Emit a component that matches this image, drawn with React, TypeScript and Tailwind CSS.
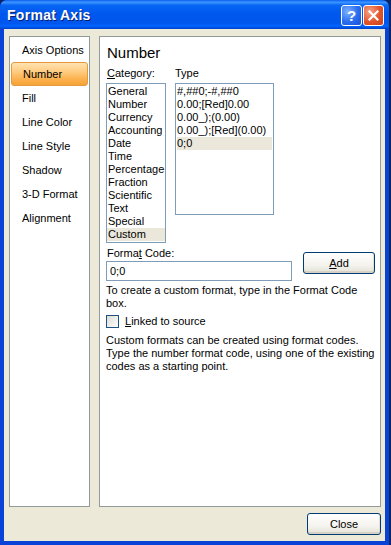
import React from "react";

const font = { fontFamily: '"Liberation Sans", Arial, sans-serif' };

function XPButton({ children, className = "" }: { children: React.ReactNode; className?: string }) {
  return (
    <div
      className={
        "flex items-center justify-center rounded-[3px] border border-[#003C74] bg-[linear-gradient(to_bottom,#FFFFFF_0%,#F4F3EE_60%,#E3E1D6_100%)] shadow-[inset_0_-2px_0_#D6D0C5,inset_-1px_0_0_#E3E0D4] text-[11px] text-black " +
        className
      }
    >
      {children}
    </div>
  );
}

export default function App() {
  const nav = ["Axis Options", "Number", "Fill", "Line Color", "Line Style", "Shadow", "3-D Format", "Alignment"];
  const cats = ["General", "Number", "Currency", "Accounting", "Date", "Time", "Percentage", "Fraction", "Scientific", "Text", "Special", "Custom"];
  const types = ["#,##0;-#,##0", "0.00;[Red]0.00", "0.00_);(0.00)", "0.00_);[Red](0.00)", "0;0"];
  return (
    <div className="w-[391px] h-[545px] bg-[#0A246A] flex" style={font}>
      <div className="w-[389px] h-[545px] flex flex-col rounded-t-[7px] overflow-hidden bg-[#0842D6]">
        {/* Title bar */}
        <div className="h-[29px] shrink-0 flex items-center pl-[7px] pr-[5px] bg-[linear-gradient(to_bottom,#0A5FF0_0%,#3D95FF_8%,#0766F4_18%,#0058EE_45%,#0056EC_80%,#0164FF_90%,#0040C8_100%)]">
          <span className="text-white font-bold text-[14px] tracking-[0.3px] mt-[2px] [text-shadow:1px_1px_0_#0A1E6E]">Format Axis</span>
          <div className="ml-auto flex gap-[1px] mt-[1px]">
            <div className="w-[21px] h-[21px] rounded-[3px] border border-white bg-[radial-gradient(circle_at_30%_30%,#7FB3FF_0%,#2A6CF0_55%,#1550D8_100%)] flex items-center justify-center text-white font-bold text-[15px] leading-none">?</div>
            <div className="w-[21px] h-[21px] rounded-[3px] border border-white bg-[radial-gradient(circle_at_30%_30%,#F6A488_0%,#E2542B_55%,#C8421E_100%)] flex items-center justify-center">
              <svg width="11" height="11" viewBox="0 0 11 11">
                <path d="M1.5 1.5 L9.5 9.5 M9.5 1.5 L1.5 9.5" stroke="white" strokeWidth="2.2" strokeLinecap="square" />
              </svg>
            </div>
          </div>
        </div>
        {/* Body */}
        <div className="flex-1 flex flex-col mx-[4px] mb-[4px] bg-[#ECE9D8]">
          <div className="flex pt-[7px] pl-[5px] pr-[4px] gap-[9px]">
            {/* Left nav */}
            <div className="w-[81px] h-[471px] border border-[#919B9C] bg-white px-[1px] pt-[1px] flex flex-col">
              {nav.map((n) => (
                <div
                  key={n}
                  className={
                    "h-[24px] flex items-center pl-[11px] text-[11px] text-black " +
                    (n === "Number"
                      ? "rounded-[3px] border border-[#E39A3E] bg-[linear-gradient(to_bottom,#FFE3B0_0%,#FFCB80_40%,#FBB04C_75%,#F6A238_100%)] pl-[10px]"
                      : "")
                  }
                >
                  {n}
                </div>
              ))}
            </div>
            {/* Right panel */}
            <div className="w-[282px] h-[471px] border border-[#919B9C] bg-white pl-[6px] pt-[7px] flex flex-col">
              <div className="text-[15px] leading-[18px] pl-[1px] text-black">Number</div>
              <div className="flex mt-[5px] text-[11px] leading-[13px] text-black">
                <div className="w-[69px] pl-[1px]">
                  <span className="underline">C</span>ategory:
                </div>
                <div>Type</div>
              </div>
              <div className="flex mt-[3px] gap-[9px] items-start">
                <div className="w-[60px] h-[160px] border border-[#7F9DB9] p-[1px] flex flex-col text-[11px] leading-[13px] text-black">
                  {cats.map((c) => (
                    <div key={c} className={"h-[13px] whitespace-nowrap " + (c === "Custom" ? "bg-[#EBE8DB] -mx-[1px] px-[1px]" : "")}>
                      {c}
                    </div>
                  ))}
                </div>
                <div className="w-[99px] h-[132px] border border-[#7F9DB9] p-[1px] flex flex-col text-[11px] leading-[13px] text-black">
                  {types.map((t) => (
                    <div key={t} className={"h-[13px] whitespace-nowrap " + (t === "0;0" ? "bg-[#EBE8DB]" : "")}>
                      {t}
                    </div>
                  ))}
                </div>
              </div>
              <div className="flex items-start mt-[4px] text-[11px] text-black">
                <div className="flex flex-col">
                  <div className="h-[13px] leading-[13px] pl-[1px]">
                    Forma<span className="underline">t</span> Code:
                  </div>
                  <div className="mt-[1px] w-[186px] h-[20px] border border-[#7F9DB9] bg-white flex items-center pl-[3px]">0;0</div>
                </div>
                <XPButton className="ml-[11px] mt-[5px] w-[72px] h-[22px]">
                  <span>
                    <span className="underline">A</span>dd
                  </span>
                </XPButton>
              </div>
              <div className="mt-[3px] text-[11px] leading-[13px] text-black w-[260px]">
                To create a custom format, type in the Format Code box.
              </div>
              <div className="flex items-center mt-[5px] text-[11px] text-black">
                <div className="w-[13px] h-[13px] border border-[#1C5180] bg-[linear-gradient(135deg,#DCDCD7_0%,#F0F0EC_60%,#FFFFFF_100%)]"></div>
                <span className="ml-[6px] leading-[13px]">
                  <span className="underline">L</span>inked to source
                </span>
              </div>
              <div className="mt-[6px] text-[11px] leading-[13px] text-black w-[272px]">
                Custom formats can be created using format codes. Type the number format code, using one of the existing codes as a starting point.
              </div>
            </div>
          </div>
          <div className="flex justify-end pr-[4px] mt-[6px]">
            <XPButton className="w-[74px] h-[22px]">Close</XPButton>
          </div>
        </div>
      </div>
    </div>
  );
}
